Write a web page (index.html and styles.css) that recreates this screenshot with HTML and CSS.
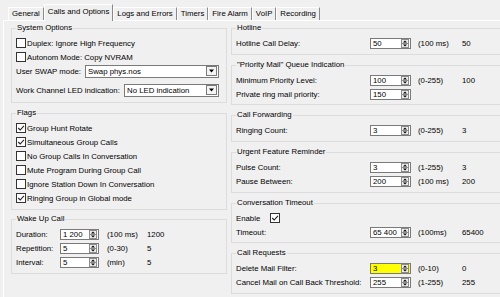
FILE: index.html
```html
<!DOCTYPE html>
<html>
    <head>
        <meta charset="utf-8">
        <link rel="stylesheet" href="styles.css">
        <title>Calls and Options</title>
    </head>
    <body>
        <div class="window">
            <div class="tabs">
                <span class="tab">General</span>
                <span class="tab active">Calls and Options</span>
                <span class="tab">Logs and Errors</span>
                <span class="tab">Timers</span>
                <span class="tab">Fire Alarm</span>
                <span class="tab">VoIP</span>
                <span class="tab">Recording</span>
            </div>
            <div class="panel">
                <div class="column">
                    <fieldset class="group system">
                        <legend>System Options</legend>
                        <div class="check"><span class="box"></span>Duplex: Ignore High Frequency</div>
                        <div class="check"><span class="box"></span>Autonom Mode: Copy NVRAM</div>
                        <div class="field">
                            <span class="swap-name">User SWAP mode:</span>
                            <span class="select swap">Swap phys.nos<svg class="drop"><use href="#drop"/></svg></span>
                        </div>
                        <div class="field led">
                            <span class="led-name">Work Channel LED indication:</span>
                            <span class="select led-select">No LED indication<svg class="drop"><use href="#drop"/></svg></span>
                        </div>
                    </fieldset>

                    <fieldset class="group flags">
                        <legend>Flags</legend>
                        <div class="check"><span class="box"><svg><use href="#tick"/></svg></span>Group Hunt Rotate</div>
                        <div class="check"><span class="box"><svg><use href="#tick"/></svg></span>Simultaneous Group Calls</div>
                        <div class="check"><span class="box"></span>No Group Calls In Conversation</div>
                        <div class="check"><span class="box"></span>Mute Program During Group Call</div>
                        <div class="check"><span class="box"></span>Ignore Station Down In Conversation</div>
                        <div class="check"><span class="box"><svg><use href="#tick"/></svg></span>Ringing Group in Global mode</div>
                    </fieldset>

                    <fieldset class="group wake">
                        <legend>Wake Up Call</legend>
                        <div class="num">
                            <span>Duration:</span>
                            <span class="spin"><span class="val">1 200</span><svg class="arrows"><use href="#spin"/></svg></span>
                            <span></span><span>(100 ms)</span><span>1200</span>
                        </div>
                        <div class="num">
                            <span>Repetition:</span>
                            <span class="spin"><span class="val">5</span><svg class="arrows"><use href="#spin"/></svg></span>
                            <span></span><span>(0-30)</span><span>5</span>
                        </div>
                        <div class="num">
                            <span>Interval:</span>
                            <span class="spin"><span class="val">5</span><svg class="arrows"><use href="#spin"/></svg></span>
                            <span></span><span>(min)</span><span>5</span>
                        </div>
                    </fieldset>
                </div>

                <div class="column right">
                    <fieldset class="group">
                        <legend>Hotline</legend>
                        <div class="num">
                            <span>Hotline Call Delay:</span>
                            <span class="spin"><span class="val">50</span><svg class="arrows"><use href="#spin"/></svg></span>
                            <span></span><span>(100 ms)</span><span>50</span>
                        </div>
                    </fieldset>

                    <fieldset class="group priority">
                        <legend>"Priority Mail" Queue Indication</legend>
                        <div class="num">
                            <span>Minimum Priority Level:</span>
                            <span class="spin"><span class="val">100</span><svg class="arrows"><use href="#spin"/></svg></span>
                            <span></span><span>(0-255)</span><span>100</span>
                        </div>
                        <div class="num">
                            <span>Private ring mail priority:</span>
                            <span class="spin"><span class="val">150</span><svg class="arrows"><use href="#spin"/></svg></span>
                            <span></span><span></span><span></span>
                        </div>
                    </fieldset>

                    <fieldset class="group">
                        <legend>Call Forwarding</legend>
                        <div class="num">
                            <span>Ringing Count:</span>
                            <span class="spin"><span class="val">3</span><svg class="arrows"><use href="#spin"/></svg></span>
                            <span></span><span>(0-255)</span><span>3</span>
                        </div>
                    </fieldset>

                    <fieldset class="group">
                        <legend>Urgent Feature Reminder</legend>
                        <div class="num">
                            <span>Pulse Count:</span>
                            <span class="spin"><span class="val">3</span><svg class="arrows"><use href="#spin"/></svg></span>
                            <span></span><span>(1-255)</span><span>3</span>
                        </div>
                        <div class="num">
                            <span>Pause Between:</span>
                            <span class="spin"><span class="val">200</span><svg class="arrows"><use href="#spin"/></svg></span>
                            <span></span><span>(100 ms)</span><span>200</span>
                        </div>
                    </fieldset>

                    <fieldset class="group conversation">
                        <legend>Conversation Timeout</legend>
                        <div class="check enable">Enable<span class="box"><svg><use href="#tick"/></svg></span></div>
                        <div class="num">
                            <span>Timeout:</span>
                            <span class="spin"><span class="val">65 400</span><svg class="arrows"><use href="#spin"/></svg></span>
                            <span></span><span>(100ms)</span><span>65400</span>
                        </div>
                    </fieldset>

                    <fieldset class="group">
                        <legend>Call Requests</legend>
                        <div class="num">
                            <span>Delete Mail Filter:</span>
                            <span class="spin marked"><span class="val">3</span><svg class="arrows"><use href="#spin"/></svg></span>
                            <span></span><span>(0-10)</span><span>0</span>
                        </div>
                        <div class="num">
                            <span>Cancel Mail on Call Back Threshold:</span>
                            <span class="spin"><span class="val">255</span><svg class="arrows"><use href="#spin"/></svg></span>
                            <span></span><span>(1-255)</span><span>255</span>
                        </div>
                    </fieldset>
                </div>
            </div>
        </div>

        <svg class="defs">
            <symbol id="spin" viewBox="0 0 8 9">
                <rect x=".5" y=".5" width="7" height="8" fill="#ececec" stroke="#8c8c8c"/>
                <path d="M1 4.5h6" stroke="#8c8c8c"/>
                <path d="M4 1.5 6 3.5H2z M4 7.5 6 5.5H2z" fill="#000"/>
            </symbol>
            <symbol id="tick" viewBox="0 0 8 8">
                <path d="M1.2 4 3.2 6 6.9 1.8" fill="none" stroke="#222" stroke-width="1.1"/>
            </symbol>
            <symbol id="drop" viewBox="0 0 11 10">
                <rect x=".5" y=".5" width="10" height="9" fill="#f4f4f4" stroke="#7a7a7a"/>
                <path d="M3 3.5h5L5.5 6.5z" fill="#000"/>
            </symbol>
        </svg>
    </body>
</html>
```

FILE: styles.css
```css
body {
    margin: 0;
    background: #f0f0f0;
    font-family: "Liberation Sans", Arial, sans-serif;
    font-size: 7.8px;
    color: #000;
    overflow: hidden;
}
.window {
    width: 507px;
    height: 297px;
    padding-left: 3px;
}
.tabs {
    display: flex;
    align-items: flex-end;
    height: 16px;
    padding: 4px 0 0 5px;
}
.tab {
    box-sizing: border-box;
    height: 13px;
    line-height: 12px;
    padding: 0 3px;
    border-top: 1px solid #fff;
    border-left: 1px solid #fff;
    border-right: 1px solid #8a8a8a;
    white-space: nowrap;
}
.tab.active {
    position: relative;
    z-index: 1;
    height: 17px;
    line-height: 13px;
    margin-bottom: -1px;
    background: #f0f0f0;
}
.panel {
    border-top: 1px solid #fff;
    border-left: 1px solid #fff;
    padding: 2px 0 0 7px;
    display: grid;
    grid-template-columns: 216px 272px;
    column-gap: 4px;
    align-items: start;
}
.group {
    margin: 0 0 5px;
    padding: 3px 4px 4px;
    border: 1px solid #dcdcdc;
    min-width: 0;
}
.group legend {
    padding: 0 1px;
    line-height: 10px;
}
.system {
    padding-top: 3px;
    padding-bottom: 5px;
}
.flags {
    margin-bottom: 4px;
}
.priority, .conversation {
    padding-bottom: 3px;
}
.check, .field, .num {
    display: flex;
    align-items: center;
    height: 14px;
    white-space: nowrap;
}
.box {
    box-sizing: border-box;
    width: 10px;
    height: 10px;
    margin-right: 1px;
    border: 1px solid #333;
    background: #fff;
}
.box svg {
    display: block;
    width: 8px;
    height: 8px;
}
.enable .box {
    margin-left: 10px;
}
.select {
    box-sizing: border-box;
    display: flex;
    align-items: center;
    justify-content: space-between;
    height: 13px;
    padding: 0 1px 0 2px;
    border: 1px solid #7a7a7a;
    background: #fff;
}
.drop {
    width: 11px;
    height: 10px;
}
.swap-name {
    width: 69px;
}
.swap {
    width: 134px;
}
.led {
    margin-top: 5px;
}
.led-name {
    width: 108px;
}
.led-select {
    width: 95px;
}
.num {
    display: grid;
    grid-template-columns: 134px 41px 7px 44px auto;
}
.wake .num {
    grid-template-columns: 44px 39px 8px 40px auto;
}
.spin {
    box-sizing: border-box;
    display: flex;
    align-items: center;
    justify-content: space-between;
    height: 11px;
    padding: 0 1px 0 2px;
    border: 1px solid #7a7a7a;
    background: #fff;
}
.spin.marked {
    background: #ffff00;
}
.arrows {
    width: 8px;
    height: 9px;
}
.defs {
    display: block;
    width: 0;
    height: 0;
}
```
